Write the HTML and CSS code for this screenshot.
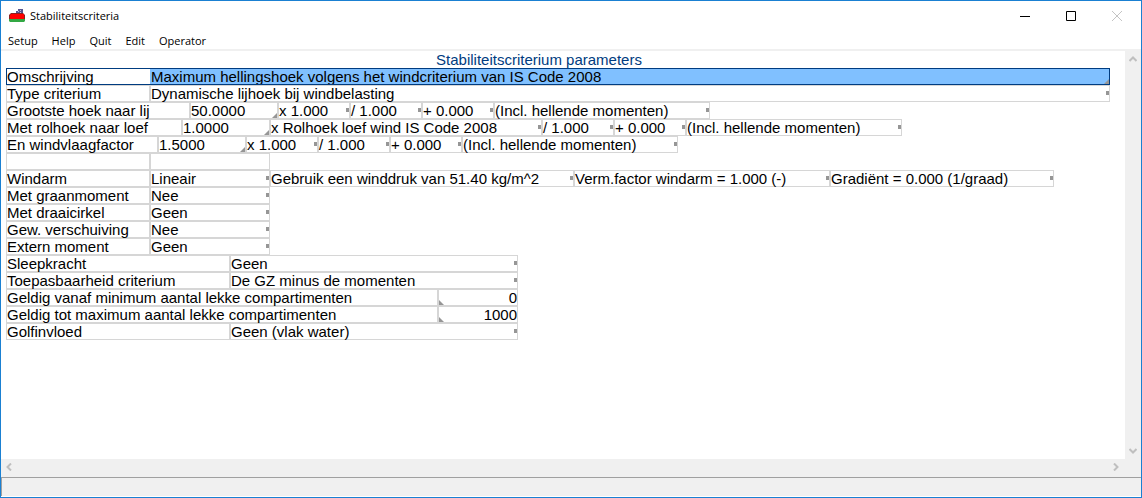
FILE: index.html
```html
<!DOCTYPE html>
<html lang="nl">
<head>
<meta charset="utf-8">
<title>Stabiliteitscriteria</title>
<link rel="stylesheet" href="styles.css">
</head>
<body>
<div class="window">
  <header class="titlebar">
    <svg class="app-icon" width="16" height="14" viewBox="0 0 16 14" aria-hidden="true">
      <path d="M7 5V2h2V0h5v5z" fill="#56568f"/>
      <path d="M9 2h1v1H9zM11 1h1v1h-1zM11 3h1v1h-1z" fill="#b9b9dc"/>
      <path d="M0 6l2-2h12l2 2v5H0z" fill="#8c2020"/>
      <path d="M1 6l1-1h13v5H1z" fill="#fe0000"/>
      <path d="M0 10h16v2l-1 1H1l-1-1z" fill="#33a844"/>
    </svg>
    <h1 class="window-title">Stabiliteitscriteria</h1>
    <div class="window-buttons">
      <button class="window-button" type="button" aria-label="Minimaliseren"><svg width="10" height="10" viewBox="0 0 10 10"><path d="M0 5.500h10" stroke="#000"/></svg></button>
      <button class="window-button" type="button" aria-label="Maximaliseren"><svg width="10" height="10" viewBox="0 0 10 10"><path d="M.5.5h9v9h-9z" fill="none" stroke="#000"/></svg></button>
      <button class="window-button" type="button" aria-label="Sluiten" disabled><svg width="10" height="10" viewBox="0 0 10 10"><path d="M0 0l10 10M10 0L0 10" stroke="#c4c4c4"/></svg></button>
    </div>
  </header>
  <nav class="menubar">
    <button class="menu" type="button">Setup</button>
    <button class="menu" type="button">Help</button>
    <button class="menu" type="button">Quit</button>
    <button class="menu" type="button">Edit</button>
    <button class="menu" type="button">Operator</button>
  </nav>
  <div class="workspace">
    <main class="sheet">
      <h2 class="sheet-title">Stabiliteitscriterium parameters</h2>
      <div class="row selected">
        <label class="cell w144" for="omschrijving">Omschrijving</label>
        <span class="cell edit fill"><input class="field" id="omschrijving" value="Maximum hellingshoek volgens het windcriterium van IS Code 2008"></span>
      </div>
      <div class="row">
        <span class="cell w144">Type criterium</span>
        <button type="button" class="cell pick fill">Dynamische lijhoek bij windbelasting</button>
      </div>
      <div class="row">
        <label class="cell w184" for="lij">Grootste hoek naar lij</label>
        <span class="cell edit w88"><input class="field" id="lij" value="50.0000"></span>
        <button type="button" class="cell pick w72">x 1.000</button>
        <button type="button" class="cell pick w72">/ 1.000</button>
        <button type="button" class="cell pick w72">+ 0.000</button>
        <button type="button" class="cell pick w216">(Incl. hellende momenten)</button>
      </div>
      <div class="row">
        <label class="cell w176" for="loef">Met rolhoek naar loef</label>
        <span class="cell edit w88"><input class="field" id="loef" value="1.0000"></span>
        <button type="button" class="cell pick w272">x Rolhoek loef wind IS Code 2008</button>
        <button type="button" class="cell pick w72">/ 1.000</button>
        <button type="button" class="cell pick w72">+ 0.000</button>
        <button type="button" class="cell pick w216">(Incl. hellende momenten)</button>
      </div>
      <div class="row">
        <label class="cell w152" for="vlaag">En windvlaagfactor</label>
        <span class="cell edit w88"><input class="field" id="vlaag" value="1.5000"></span>
        <button type="button" class="cell pick w72">x 1.000</button>
        <button type="button" class="cell pick w72">/ 1.000</button>
        <button type="button" class="cell pick w72">+ 0.000</button>
        <button type="button" class="cell pick w216">(Incl. hellende momenten)</button>
      </div>
      <div class="row">
        <span class="cell w144"></span>
        <span class="cell w120"></span>
      </div>
      <div class="row">
        <span class="cell w144">Windarm</span>
        <button type="button" class="cell pick w120">Lineair</button>
        <button type="button" class="cell pick w304">Gebruik een winddruk van 51.40 kg/m^2</button>
        <button type="button" class="cell pick w256">Verm.factor windarm = 1.000 (-)</button>
        <button type="button" class="cell pick w224">Gradiënt = 0.000 (1/graad)</button>
      </div>
      <div class="row">
        <span class="cell w144">Met graanmoment</span>
        <button type="button" class="cell pick w120">Nee</button>
      </div>
      <div class="row">
        <span class="cell w144">Met draaicirkel</span>
        <button type="button" class="cell pick w120">Geen</button>
      </div>
      <div class="row">
        <span class="cell w144">Gew. verschuiving</span>
        <button type="button" class="cell pick w120">Nee</button>
      </div>
      <div class="row">
        <span class="cell w144">Extern moment</span>
        <button type="button" class="cell pick w120">Geen</button>
      </div>
      <div class="row">
        <span class="cell w224">Sleepkracht</span>
        <button type="button" class="cell pick w288">Geen</button>
      </div>
      <div class="row">
        <span class="cell w224">Toepasbaarheid criterium</span>
        <button type="button" class="cell pick w288">De GZ minus de momenten</button>
      </div>
      <div class="row">
        <label class="cell w432" for="minimum">Geldig vanaf minimum aantal lekke compartimenten</label>
        <span class="cell edit number w80"><input class="field" id="minimum" value="0"></span>
      </div>
      <div class="row">
        <label class="cell w432" for="maximum">Geldig tot maximum aantal lekke compartimenten</label>
        <span class="cell edit number w80"><input class="field" id="maximum" value="1000"></span>
      </div>
      <div class="row">
        <span class="cell w224">Golfinvloed</span>
        <button type="button" class="cell pick w288">Geen (vlak water)</button>
      </div>
    </main>
    <div class="scroll vertical">
      <button class="arrow" type="button" aria-label="Omhoog"><svg width="8" height="6" viewBox="0 0 8 6"><path d="M.5 5L4 1.500 7.500 5"/></svg></button>
      <button class="arrow" type="button" aria-label="Omlaag"><svg width="8" height="6" viewBox="0 0 8 6"><path d="M.5 1L4 4.500 7.500 1"/></svg></button>
    </div>
  </div>
  <div class="scroll horizontal">
    <button class="arrow" type="button" aria-label="Links"><svg width="6" height="8" viewBox="0 0 6 8"><path d="M5 .5L1.500 4 5 7.500"/></svg></button>
    <button class="arrow" type="button" aria-label="Rechts"><svg width="6" height="8" viewBox="0 0 6 8"><path d="M1 .5L4.500 4 1 7.500"/></svg></button>
  </div>
  <footer class="statusbar"></footer>
</div>
</body>
</html>
```
FILE: styles.css
```css
* {
  box-sizing: border-box;
}

body {
  margin: 0;
  background: #fff;
  color: #000;
  font-family: "Liberation Sans", Arial, sans-serif;
  font-size: 15px;
}

button,
input {
  margin: 0;
  padding: 0;
  border: 0;
  border-radius: 0;
  outline: 0;
  background: none;
  color: inherit;
  font: inherit;
  text-align: left;
}

.window {
  display: flex;
  flex-direction: column;
  min-height: 100vh;
  border: 1px solid #1a80d2;
  padding-bottom: 1px;
}

.titlebar {
  display: flex;
  align-items: center;
  height: 29px;
  padding-left: 8px;
  gap: 5px;
}

.window-title {
  flex: 1;
  margin: 0;
  font: 11px/16px "Open Sans", "Noto Sans", sans-serif;
}

.window-buttons {
  display: flex;
  padding-right: 1px;
}

.window-button {
  display: flex;
  align-items: center;
  justify-content: center;
  width: 46px;
  height: 29px;
}

.menubar {
  display: flex;
  align-items: center;
  gap: 14px;
  height: 21px;
  padding-top: 2px;
  padding-left: 7px;
  border-bottom: 2px solid #f0f0f0;
  font: 11px/16px "Open Sans", "Noto Sans", sans-serif;
}

.workspace {
  display: flex;
  flex: 1;
}

.sheet {
  flex: 1;
  padding: 0 15px 16px 5px;
}

.sheet-title {
  margin: 0;
  padding-right: 38px;
  color: #003c80;
  font-size: 15px;
  font-weight: 400;
  line-height: 17px;
  text-align: center;
}

.row {
  display: flex;
  height: 17px;
}

.cell {
  flex: none;
  position: relative;
  height: 17px;
  border: 1px solid #d6d6d6;
  line-height: 15px;
  white-space: nowrap;
}

.cell.fill {
  flex: 1;
}

.field {
  display: block;
  width: 100%;
  height: 15px;
  line-height: 15px;
}

.number .field {
  text-align: right;
}

.pick::after {
  content: "";
  position: absolute;
  top: 5px;
  right: 0;
  width: 3px;
  height: 4px;
  background: #969696;
}

.edit::after {
  content: "";
  position: absolute;
  right: 0;
  bottom: 0;
  width: 5px;
  height: 5px;
  background: #969696;
  clip-path: polygon(100% 0, 100% 100%, 0 100%);
}

.number::after {
  right: auto;
  left: 0;
  clip-path: polygon(0 0, 100% 100%, 0 100%);
}

.selected .cell {
  border-color: #003c80;
}

.selected label {
  border-right: 0;
}

.selected .edit {
  border-left: 0;
  padding-left: 1px;
  background: #80c0ff;
}

.w72 { width: 72px; }
.w80 { width: 80px; }
.w88 { width: 88px; }
.w120 { width: 120px; }
.w144 { width: 144px; }
.w152 { width: 152px; }
.w176 { width: 176px; }
.w184 { width: 184px; }
.w216 { width: 216px; }
.w224 { width: 224px; }
.w256 { width: 256px; }
.w272 { width: 272px; }
.w288 { width: 288px; }
.w304 { width: 304px; }
.w432 { width: 432px; }

.scroll {
  display: flex;
  justify-content: space-between;
  background: #f0f0f0;
}

.vertical {
  flex-direction: column;
  width: 16px;
}

.horizontal {
  height: 18px;
  padding-right: 17px;
}

.arrow {
  display: flex;
  align-items: center;
  justify-content: center;
  width: 16px;
  height: 16px;
}

.arrow path {
  fill: none;
  stroke: #bfbfbf;
  stroke-width: 2;
}

.statusbar {
  height: 19px;
  border-top: 1px solid #a0a0a0;
  border-left: 1px solid #a0a0a0;
  background: #f0f0f0;
}
```
